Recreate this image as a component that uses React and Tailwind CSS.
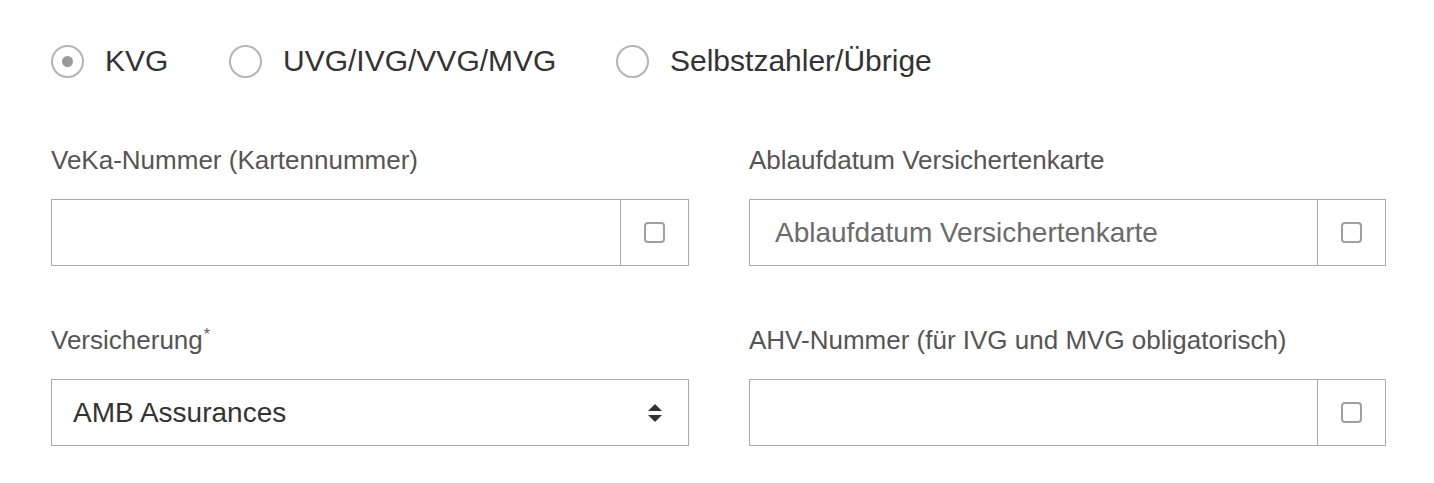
import React, { useState } from "react";

const font = { fontFamily: '"Liberation Sans", Arial, sans-serif' };

const Radio = ({ label, checked, onClick }) => (
  <label
    onClick={onClick}
    className="flex items-center cursor-pointer"
  >
    <span className="w-[33px] h-[33px] rounded-full border-2 border-[#b4b4b4] flex items-center justify-center shrink-0">
      {checked && <span className="w-[11px] h-[11px] rounded-full bg-[#9a9a9a]" />}
    </span>
    <span className="ml-[21px] text-[30px] leading-[34px] text-[#333]">{label}</span>
  </label>
);

const AddonInput = ({ placeholder }) => (
  <div className="flex h-[67px] border border-[#ababab]">
    <input
      placeholder={placeholder}
      className="flex-1 min-w-0 px-[25px] text-[28px] text-[#333] placeholder:text-[#6b6b6b] outline-none bg-white"
    />
    <div className="w-[68px] shrink-0 border-l border-[#ababab] flex items-center justify-center">
      <span className="w-[21px] h-[21px] rounded-[4px] border-2 border-[#a0a0a0]" />
    </div>
  </div>
);

const Label = ({ children, required }) => (
  <div className="text-[26px] leading-[30px] text-[#555] mb-[24px]">
    {children}
    {required && (
      <sup className="text-[16px] text-[#8a4b63] ml-[1px] relative -top-[9px]">*</sup>
    )}
  </div>
);

export default function App() {
  const [type, setType] = useState("KVG");
  const options = ["KVG", "UVG/IVG/VVG/MVG", "Selbstzahler/Übrige"];

  return (
    <div style={font} className="w-[1434px] h-[483px] bg-white pl-[51px] pt-[44px]">
      <div className="flex items-center">
        <div className="w-[178px]">
          <Radio label={options[0]} checked={type === options[0]} onClick={() => setType(options[0])} />
        </div>
        <div className="w-[387px]">
          <Radio label={options[1]} checked={type === options[1]} onClick={() => setType(options[1])} />
        </div>
        <Radio label={options[2]} checked={type === options[2]} onClick={() => setType(options[2])} />
      </div>

      <div className="grid grid-cols-[638px_637px] gap-x-[60px] mt-[67px]">
        <div>
          <Label>VeKa-Nummer (Kartennummer)</Label>
          <AddonInput />
        </div>
        <div>
          <Label>Ablaufdatum Versichertenkarte</Label>
          <AddonInput placeholder="Ablaufdatum Versichertenkarte" />
        </div>

        <div className="mt-[59px]">
          <Label required>Versicherung</Label>
          <div className="flex items-center h-[67px] border border-[#ababab] pl-[21px] pr-[25px]">
            <span className="flex-1 text-[28px] text-[#333]">AMB Assurances</span>
            <svg width="16" height="20" viewBox="0 0 16 20">
              <path d="M8 1 L15 8 L1 8 Z" fill="#333" />
              <path d="M1 12 L15 12 L8 19 Z" fill="#333" />
            </svg>
          </div>
        </div>
        <div className="mt-[59px]">
          <Label>AHV-Nummer (für IVG und MVG obligatorisch)</Label>
          <AddonInput />
        </div>
      </div>
    </div>
  );
}
